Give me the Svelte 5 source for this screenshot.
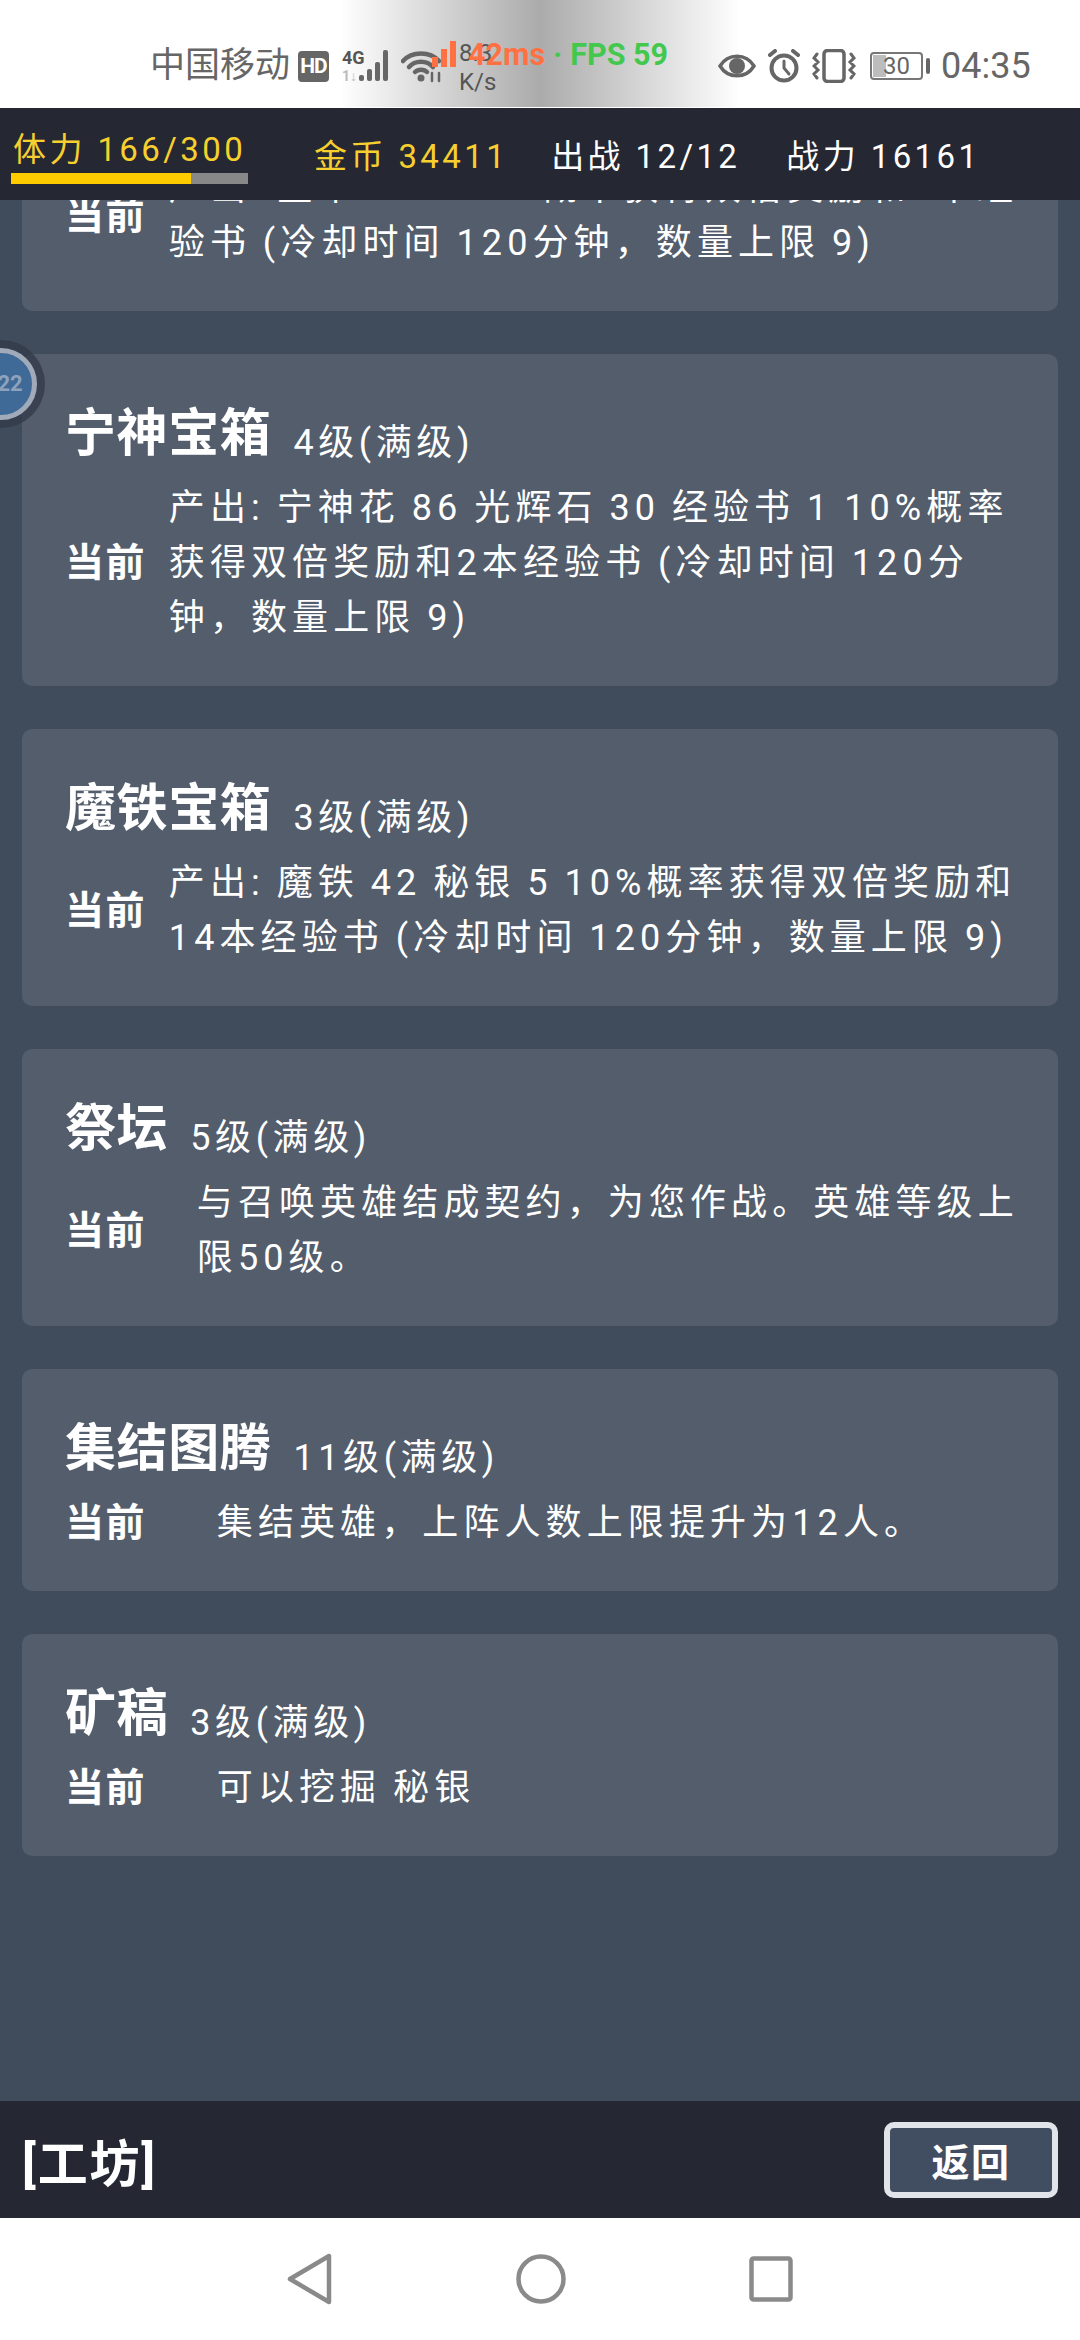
<script>
  const cards = [
    { name: '', level: '', gap: 'gap-s', lines: ['产出: 星草 126 10%概率获得双倍奖励和1本经', '验书 (冷却时间 120分钟，数量上限 9)'] },
    { name: '宁神宝箱', level: '4级(满级)', gap: 'gap-s', lines: ['产出: 宁神花 86 光辉石 30 经验书 1 10%概率', '获得双倍奖励和2本经验书 (冷却时间 120分', '钟，数量上限 9)'] },
    { name: '魔铁宝箱', level: '3级(满级)', gap: 'gap-s', lines: ['产出: 魔铁 42 秘银 5 10%概率获得双倍奖励和', '14本经验书 (冷却时间 120分钟，数量上限 9)'] },
    { name: '祭坛', level: '5级(满级)', gap: 'gap-m', lines: ['与召唤英雄结成契约，为您作战。英雄等级上', '限50级。'] },
    { name: '集结图腾', level: '11级(满级)', gap: 'gap-l', lines: ['集结英雄，上阵人数上限提升为12人。'] },
    { name: '矿稿', level: '3级(满级)', gap: 'gap-l', lines: ['可以挖掘 秘银'] }
  ];
</script>

<div class="screen">
  <header class="status">
    <div class="sheen"></div>
    <div class="left">
      <span class="carrier">中国移动</span>
      <span class="hd">HD</span>
      <svg class="signal" width="56" height="34" viewBox="0 0 56 34">
        <text x="2" y="15" class="g4">4G</text>
        <text x="2" y="32" class="one">1↓</text>
        <rect x="19" y="26" width="5" height="6" rx="2" fill="#666"/>
        <rect x="27" y="20" width="5" height="12" rx="2" fill="#666"/>
        <rect x="35" y="13" width="5" height="19" rx="2" fill="#666"/>
        <rect x="43" y="1" width="5" height="31" rx="2" fill="#666"/>
      </svg>
      <svg class="wifi" width="42" height="34" viewBox="0 0 42 34" fill="none" stroke="#666" stroke-width="4.5" stroke-linecap="round">
        <path d="M2 12 C11 2 29 2 38 12"/>
        <path d="M8 18 C14 11 26 11 32 18"/>
        <path d="M14 23 C17 20 23 20 26 23"/>
        <circle cx="20" cy="29" r="3.5" fill="#666" stroke="none"/>
        <path d="M31 32 L31 24 M38 24 L38 32" stroke-width="2.5"/>
      </svg>
      <div class="speed"><span>8.3</span><span>K/s</span></div>
    </div>
    <div class="fps">
      <svg width="26" height="26" viewBox="0 0 26 26"><rect x="0" y="16" width="6" height="10" fill="#ff7043"/><rect x="9" y="8" width="6" height="18" fill="#ff7043"/><rect x="18" y="0" width="6" height="26" fill="#ff7043"/></svg>
      <span class="ms">42ms</span><span class="dot">·</span><span class="fr">FPS 59</span>
    </div>
    <div class="right">
      <svg width="38" height="30" viewBox="0 0 38 30" fill="none" stroke="#666" stroke-width="3.5"><path d="M2 15 C10 2 28 2 36 15 C28 28 10 28 2 15 Z"/><circle cx="19" cy="15" r="8" fill="#666" stroke="none"/></svg>
      <svg width="34" height="34" viewBox="0 0 34 34" fill="none" stroke="#666" stroke-width="4" stroke-linecap="round"><circle cx="17" cy="19" r="12.5"/><path d="M17 12 V19 L22 25" stroke-width="3"/><path d="M3 6 L8 2 M31 6 L26 2"/></svg>
      <svg width="44" height="34" viewBox="0 0 44 34" fill="none" stroke="#666" stroke-width="3.5" stroke-linecap="round"><rect x="12" y="1.5" width="20" height="31" rx="3.5"/><path d="M5 5 L2 9 L6 13 L2 17 L6 21 L2 25 L5 29 M39 5 L42 9 L38 13 L42 17 L38 21 L42 25 L39 29" stroke-width="3"/></svg>
      <div class="battery"><span class="charge"></span><span class="pct">30</span><span class="nub"></span></div>
      <span class="time">04:35</span>
    </div>
  </header>

  <nav class="stats">
    <div class="stamina">
      <span class="stat yellow">体力 166/300</span>
      <div class="bar"><div class="fill"></div></div>
    </div>
    <span class="stat yellow gold">金币 34411</span>
    <span class="stat army">出战 12/12</span>
    <span class="stat power">战力 16161</span>
  </nav>

  <main class="scroll">
    <div class="bubble"><span>22</span></div>
    <div class="list">
      {#each cards as c}
        <section class="card">
          <div class="title"><h2>{c.name}</h2><span class="level">{c.level}</span></div>
          <div class="row">
            <strong class="label">当前</strong>
            <div class="text {c.gap}">
              {#each c.lines as l}<div class="line">{l}</div>{/each}
            </div>
          </div>
        </section>
      {/each}
    </div>
  </main>

  <footer class="foot">
    <span class="where">[工坊]</span>
    <button class="back">返回</button>
  </footer>

  <div class="navbar">
    <svg width="46" height="52" viewBox="0 0 46 52" fill="none" stroke="#8a8a8a" stroke-width="4.5" stroke-linejoin="round"><path d="M42 3 V49 L3 26 Z"/></svg>
    <svg width="50" height="50" viewBox="0 0 50 50" fill="none" stroke="#8a8a8a" stroke-width="4.5"><circle cx="25" cy="25" r="22.5"/></svg>
    <svg width="44" height="46" viewBox="0 0 44 46" fill="none" stroke="#8a8a8a" stroke-width="4.5" stroke-linejoin="round"><rect x="2.5" y="2.5" width="39" height="41" rx="2"/></svg>
  </div>
</div>

<style>
  :global(body) { margin: 0; background: #fff; }
  .screen {
    width: 1080px; height: 2340px; display: flex; flex-direction: column; overflow: hidden;
    font-family: Roboto, "Noto Sans CJK SC", sans-serif; background: #404c5b; color: #fff;
  }
  .status { height: 108px; flex: none; position: relative; background: #fff; display: block; color: #666; }
  .sheen { position: absolute; left: 340px; width: 400px; top: 0; height: 107px;
    background: linear-gradient(90deg, #fff 0%, #ababab 50%, #fff 100%); }
  .left { position: absolute; left: 150px; top: 48px; display: flex; align-items: center; height: 36px; }
  .carrier { font-size: 35px; line-height: 36px; width: 148px; color: #666; }
  .hd { width: 31px; height: 31px; background: #666; color: #fff; font-size: 21px; font-weight: 700; border-radius: 4px;
    display: flex; align-items: center; justify-content: center; margin-right: 11px; letter-spacing: -1px; }
  .signal { margin-right: 5px; }
  .g4 { font: 700 18px Roboto, sans-serif; fill: #555; }
  .one { font: 700 14px Roboto, sans-serif; fill: #bbb; }
  .wifi { margin-right: 16px; }
  .speed { display: flex; flex-direction: column; color: #555; font-size: 24px; line-height: 29px; margin-top: 4px; }
  .fps { position: absolute; left: 432px; top: 36px; display: flex; align-items: center; font-weight: 700; font-size: 30.5px; height: 36px; }
  .fps svg { margin-right: 10px; }
  .ms { color: #ff7043; }
  .dot { color: #43c84e; margin: 0 8px; }
  .fr { color: #43c84e; }
  .right { position: absolute; left: 718px; top: 49px; display: flex; align-items: center; height: 34px; }
  .right svg { margin-right: 11px; }
  .battery { position: relative; width: 53px; height: 28px; border: 2px solid #777; border-radius: 4px; box-sizing: border-box; margin-left: 3px; margin-right: 18px; }
  .charge { position: absolute; left: 1px; top: 1px; bottom: 1px; width: 13px; background: #bdbdbd; }
  .pct { position: absolute; left: 0; right: 0; top: -1px; text-align: center; font-size: 24px; line-height: 26px; color: #666; }
  .nub { position: absolute; right: -9px; top: 4px; width: 4px; height: 16px; border-radius: 2px; background: #666; }
  .time { font-size: 36px; line-height: 36px; color: #666; }

  .stats { height: 92px; flex: none; background: #252833; display: flex; position: relative; z-index: 2; }
  .stat { font-size: 33px; letter-spacing: 3.4px; line-height: 40px; white-space: nowrap; margin-top: 29px; }
  .yellow { color: #f7cf2e; }
  .stamina { width: 237px; margin-left: 11px; }
  .stamina .stat { display: block; margin: 22px 0 0 2px; }
  .bar { height: 11px; background: #888; margin-top: 3px; }
  .fill { width: 180px; height: 100%; background: #fecb00; }
  .gold { margin-left: 66px; }
  .army { margin-left: 43px; }
  .power { margin-left: 46px; }

  .scroll { flex: 1; min-height: 0; overflow: hidden; position: relative; }
  .list { margin-top: -166px; display: flex; flex-direction: column; gap: 43px; padding: 0 22px; }
  .card { background: #535d6b; border-radius: 10px; padding: 40px 30px 40px 43px; }
  .title { display: flex; align-items: flex-end; height: 87px; }
  h2 { margin: 0 22px 7px 0; font-size: 51px; line-height: 80px; font-weight: 700; letter-spacing: 0.6px; }
  .level { font-size: 36px; line-height: 61px; letter-spacing: 4.6px; margin-bottom: 7px; }
  .row { display: flex; align-items: center; }
  .label { font-size: 39px; font-weight: 700; letter-spacing: 1.4px; flex: none; line-height: 55px; }
  .text { font-size: 36px; line-height: 55px; letter-spacing: 5.1px; word-spacing: -2.2px; }
  .line { white-space: nowrap; }
  .gap-s { margin-left: 23px; }
  .gap-m { margin-left: 51px; }
  .gap-l { margin-left: 71px; }

  .bubble { position: absolute; left: -43px; top: 140px; width: 88px; height: 88px; border-radius: 50%; background: rgba(50,58,72,.75); display: flex; align-items: center; justify-content: center; z-index: 1; }
  .bubble span { width: 72px; height: 72px; box-sizing: border-box; border-radius: 50%; background: #3f6a98; border: 5px solid #a0aab8; color: #8ea3bb; font-size: 22px; line-height: 62px; text-align: center; font-weight: 700; padding-left: 18px; }

  .foot { height: 117px; flex: none; background: #252833; display: flex; align-items: center; justify-content: space-between; padding: 0 22px; }
  .where { font-size: 50px; font-weight: 700; letter-spacing: 1.8px; }
  .back { width: 174px; height: 76px; box-sizing: border-box; border: 6px solid #e1e4e8; border-radius: 10px; background: #414d60; color: #fff; font: 700 38px Roboto, "Noto Sans CJK SC", sans-serif; letter-spacing: 1.5px; padding: 0; }

  .navbar { height: 122px; flex: none; background: #fff; display: flex; align-items: center; justify-content: center; position: relative; }
  .navbar svg:nth-child(1) { margin-right: 183px; }
  .navbar svg:nth-child(2) { margin-right: 183px; }
</style>
